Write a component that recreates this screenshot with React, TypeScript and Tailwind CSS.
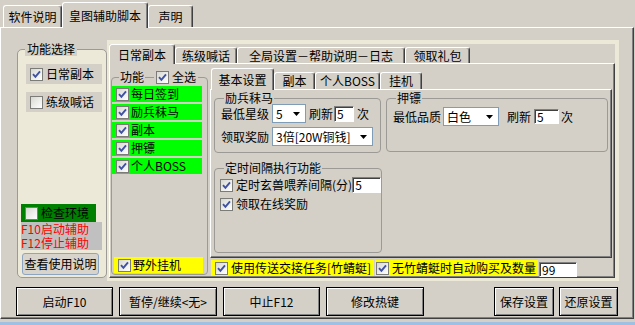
import React from "react";

type Kids = { children?: React.ReactNode; className?: string };

const Check = ({ on = true }: { on?: boolean }) => (
  <span className="flex h-[13px] w-[13px] flex-none items-center justify-center border border-[#7b7b78] bg-linear-to-br from-[#d8d8d2] to-white">
    {on && (
      <svg width="9" height="9" viewBox="0 0 9 9">
        <path d="M1 4.2 L3.4 6.8 L8 1.4" fill="none" stroke="#3f51a3" strokeWidth="1.9" />
      </svg>
    )}
  </span>
);

const Tab = ({ active, className = "", children }: Kids & { active?: boolean }) => (
  <div
    className={`flex flex-none items-center justify-center whitespace-nowrap rounded-t-[3px] border-l border-r border-t border-l-white border-r-[#404040] border-t-white shadow-[inset_-1px_0_0_#808080] ${
      active ? "relative z-10 -mb-px bg-[#d4d0c8]" : ""
    } ${className}`}
  >
    {children}
  </div>
);

const Panel = ({ className = "", children }: Kids) => (
  <div
    className={`border-b border-l border-r border-t border-b-[#404040] border-l-white border-r-[#404040] border-t-white shadow-[inset_-1px_-1px_0_#808080] ${className}`}
  >
    {children}
  </div>
);

const Group = ({ title, className = "", children }: Kids & { title: React.ReactNode }) => (
  <div className={`flex-none rounded-[4px] border border-[#9c9a94] ${className}`}>
    <div className="-mt-[8px] ml-[9px] w-fit bg-[#d4d0c8] px-[1px]">{title}</div>
    {children}
  </div>
);

const Combo = ({ value, className = "" }: { value: string; className?: string }) => (
  <div className={`flex flex-none items-center border border-[#7f9db9] bg-white pl-[3px] pr-[5px] ${className}`}>
    <span className="flex-1 whitespace-nowrap">{value}</span>
    <svg width="7" height="4" viewBox="0 0 7 4">
      <path d="M0 0H7L3.5 4Z" fill="#000" />
    </svg>
  </div>
);

const Field = ({ value, className = "" }: { value: string; className?: string }) => (
  <div
    className={`flex flex-none items-center border border-b-white border-l-[#808080] border-r-white border-t-[#808080] bg-white pl-[2px] shadow-[inset_1px_1px_0_#404040] ${className}`}
  >
    {value}
  </div>
);

const Button = ({ className = "", children }: Kids) => (
  <div
    className={`flex h-[29px] flex-none items-center justify-center border border-black shadow-[inset_1px_1px_0_#fff,inset_-1px_-1px_0_#808080] ${className}`}
  >
    {children}
  </div>
);

const GreenRow = ({ label }: { label: string }) => (
  <div className="mt-[2px] flex h-[16px] w-[90px] items-center gap-[2px] bg-[#00ff00] pl-[4px] first:mt-[1px]">
    <Check />
    <span>{label}</span>
  </div>
);

const LeftGroup = () => (
  <div className="mt-[9px] h-[229px] w-[90px] flex-none rounded-[5px] border border-[#9c9a94] bg-[#ece9d8]">
    <div className="-mt-[8px] ml-[7px] w-fit bg-[#d4d0c8] px-[2px]">功能选择</div>
    <div className="ml-[8px] mt-[8px] flex h-[20px] w-[76px] items-center gap-[3px] bg-[#d4d0c8] pl-[4px]">
      <Check />
      <span>日常副本</span>
    </div>
    <div className="ml-[8px] mt-[8px] flex h-[20px] w-[76px] items-center gap-[3px] bg-[#d4d0c8] pl-[4px]">
      <Check on={false} />
      <span>练级喊话</span>
    </div>
    <div className="ml-[3px] mt-[92px] flex h-[18px] w-[75px] items-center gap-[3px] bg-[#008000] pl-[4px]">
      <Check on={false} />
      <span>检查环境</span>
    </div>
    <div className="ml-[3px] h-[28px] w-[81px] bg-[#c0c0c0] text-[#ff0000]">
      <div>F10启动辅助</div>
      <div>F12停止辅助</div>
    </div>
    <div className="ml-[4px] mt-[3px] flex h-[22px] w-[77px] items-center justify-center rounded-[3px] border border-[#8ea5c2] bg-[#d8d4cc]">
      查看使用说明
    </div>
  </div>
);

export default function App() {
  return (
    <div className="h-[325px] w-[635px] overflow-hidden bg-[#d4d0c8] font-['Noto_Sans_CJK_SC',sans-serif] text-[12px] leading-[14px] text-black">
      <div className="flex h-[27px] items-end pl-[3px]">
        <Tab className="h-[22px] w-[59px]">软件说明</Tab>
        <Tab active className="h-[26px] w-[86px]">皇图辅助脚本</Tab>
        <Tab className="h-[22px] w-[45px]">声明</Tab>
      </div>

      <Panel className="h-[292px] w-[634px]">
        <div className="flex pl-[16px] pt-[12px]">
          <LeftGroup />

          <div className="h-[241px] w-[512px] flex-none bg-[#ece9d8] pb-[3px] pl-[2px] pr-[4px] pt-[4px]">
            <div className="flex h-[19px] items-end bg-[#d4d0c8]">
              <Tab active className="h-[20px] w-[66px]">日常副本</Tab>
              <Tab className="h-[16px] w-[62px]">练级喊话</Tab>
              <Tab className="h-[16px] w-[168px]">全局设置－帮助说明－日志</Tab>
              <Tab className="h-[16px] w-[65px]">领取礼包</Tab>
            </div>
            <Panel className="flex h-[215px] bg-[#d4d0c8]">
              <div className="ml-[1px] mt-[13px] flex h-[198px] w-[97px] flex-none flex-col rounded-[4px] border border-[#9c9a94]">
                <div className="-mt-[8px] ml-[7px] flex h-[14px] gap-[9px]">
                  <span className="bg-[#d4d0c8] px-[1px]">功能</span>
                  <span className="flex items-center gap-[3px] bg-[#d4d0c8] px-[2px]">
                    <Check />
                    全选
                  </span>
                </div>
                <GreenRow label="每日签到" />
                <GreenRow label="励兵秣马" />
                <GreenRow label="副本" />
                <GreenRow label="押镖" />
                <GreenRow label="个人BOSS" />
                <div className="mb-[1px] ml-[2px] mt-auto flex h-[16px] w-[89px] items-center gap-[2px] bg-[#ffff00] pl-[4px]">
                  <Check />
                  <span>野外挂机</span>
                </div>
              </div>

              <div className="ml-[2px] mt-[4px] flex w-[402px] flex-none flex-col">
                <div className="flex h-[21px] items-end pl-[1px]">
                  <Tab active className="h-[22px] w-[63px]">基本设置</Tab>
                  <Tab className="h-[17px] w-[41px]">副本</Tab>
                  <Tab className="h-[17px] w-[65px]">个人BOSS</Tab>
                  <Tab className="h-[17px] w-[42px]">挂机</Tab>
                </div>
                <Panel className="h-[169px]">
                  <div className="mt-[8px] flex">
                    <Group title="励兵秣马" className="ml-[3px] h-[55px] w-[167px]">
                      <div className="-mt-[1px] flex h-[19px] items-center pl-[6px]">
                        <span>最低星级</span>
                        <Combo value="5" className="ml-[3px] h-[19px] w-[34px]" />
                        <span className="ml-[3px]">刷新</span>
                        <Field value="5" className="ml-[1px] h-[16px] w-[20px]" />
                        <span className="ml-[3px]">次</span>
                      </div>
                      <div className="mt-[4px] flex h-[19px] items-center pl-[6px]">
                        <span>领取奖励</span>
                        <Combo value="3倍[20W铜钱]" className="ml-[3px] h-[19px] w-[101px]" />
                      </div>
                    </Group>
                    <Group title="押镖" className="ml-[5px] h-[54px] w-[222px]">
                      <div className="mt-[2px] flex h-[19px] items-center pl-[6px]">
                        <span>最低品质</span>
                        <Combo value="白色" className="ml-[2px] h-[19px] w-[56px]" />
                        <span className="ml-[8px]">刷新</span>
                        <Field value="5" className="ml-[3px] h-[15px] w-[25px]" />
                        <span className="ml-[2px]">次</span>
                      </div>
                    </Group>
                  </div>
                  <Group title="定时间隔执行功能" className="ml-[3px] mt-[15px] h-[85px] w-[168px]">
                    <div className="mt-[2px] flex h-[16px] items-center pl-[5px]">
                      <Check />
                      <span className="ml-[3px] whitespace-nowrap">定时玄兽喂养间隔(分)</span>
                      <Field value="5" className="h-[16px] w-[29px]" />
                    </div>
                    <div className="mt-[4px] flex h-[14px] items-center pl-[5px]">
                      <Check />
                      <span className="ml-[3px]">领取在线奖励</span>
                    </div>
                  </Group>
                </Panel>
                <div className="mt-[2px] flex h-[16px] items-start">
                  <div className="ml-[1px] flex h-[16px] w-[163px] flex-none items-center gap-[3px] whitespace-nowrap bg-[#ffff00] pl-[4px]">
                    <Check />
                    <span>使用传送交接任务[竹蜻蜓]</span>
                  </div>
                  <div className="ml-[1px] flex h-[16px] w-[163px] flex-none items-center gap-[3px] whitespace-nowrap bg-[#ffff00] pl-[1px]">
                    <Check />
                    <span>无竹蜻蜓时自动购买及数量</span>
                  </div>
                  <Field value="99" className="ml-[1px] mt-[2px] h-[15px] w-[38px]" />
                </div>
              </div>
            </Panel>
          </div>
        </div>

        <div className="mt-[6px] flex pl-[15px]">
          <Button className="w-[97px]">启动F10</Button>
          <Button className="ml-[6px] w-[98px]">暂停/继续&lt;无&gt;</Button>
          <Button className="ml-[6px] w-[97px]">中止F12</Button>
          <Button className="ml-[6px] w-[98px]">修改热键</Button>
          <Button className="ml-[70px] w-[60px]">保存设置</Button>
          <Button className="ml-[5px] w-[59px]">还原设置</Button>
        </div>
      </Panel>
      <div className="mt-[3px] h-[3px] w-full bg-[#9fc0e3]" />
    </div>
  );
}
